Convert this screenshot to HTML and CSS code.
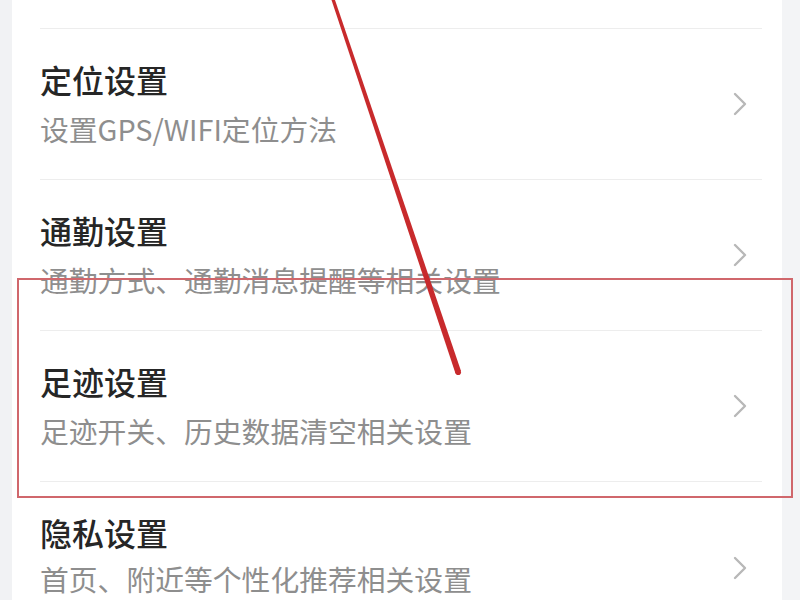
FILE: index.html
```html
<!DOCTYPE html>
<html lang="zh-CN">
<head>
<meta charset="utf-8">
<title>设置</title>
<link rel="stylesheet" href="styles.css">
</head>
<body>
<div class="screen">
  <div class="edge edge-left"></div>
  <div class="card">
    <div class="tail"></div>
    <div class="item">
      <div class="texts">
        <div class="title">定位设置</div>
        <div class="sub">设置GPS/WIFI定位方法</div>
      </div>
      <svg class="chev" viewBox="0 0 14 24" width="14" height="24"><polyline points="2,2 12,12 2,22"/></svg>
    </div>
    <div class="item">
      <div class="texts">
        <div class="title">通勤设置</div>
        <div class="sub">通勤方式、通勤消息提醒等相关设置</div>
      </div>
      <svg class="chev" viewBox="0 0 14 24" width="14" height="24"><polyline points="2,2 12,12 2,22"/></svg>
    </div>
    <div class="item">
      <div class="texts">
        <div class="title">足迹设置</div>
        <div class="sub">足迹开关、历史数据清空相关设置</div>
      </div>
      <svg class="chev" viewBox="0 0 14 24" width="14" height="24"><polyline points="2,2 12,12 2,22"/></svg>
    </div>
    <div class="item item-last">
      <div class="texts">
        <div class="title">隐私设置</div>
        <div class="sub">首页、附近等个性化推荐相关设置</div>
      </div>
      <svg class="chev" viewBox="0 0 14 24" width="14" height="24"><polyline points="2,2 12,12 2,22"/></svg>
    </div>
  </div>
  <div class="edge edge-right"></div>

  <div class="highlight"></div>
  <svg class="arrow" viewBox="0 0 800 600" width="800" height="600">
    <polygon points="331.5,0 335,0 461,371 455.5,373.5"/>
    <circle cx="458.2" cy="372.3" r="2.8"/>
  </svg>
</div>
</body>
</html>
```

FILE: styles.css
```css
html, body {
  margin: 0;
  padding: 0;
}
body {
  background: #f4f4f6;
  font-family: "Noto Sans CJK SC", "Noto Sans", sans-serif;
  overflow: hidden;
}
.screen {
  position: relative;
  width: 800px;
  height: 600px;
  display: flex;
  overflow: hidden;
}
.edge-left {
  width: 12px;
  background: #f1f2f4;
}
.edge-right {
  flex: 1;
  background: #f3f4f6;
}
.card {
  width: 770px;
  background: #ffffff;
  padding: 0 20px 0 28px;
  box-sizing: border-box;
}
.tail {
  height: 28px;
}
.item {
  border-top: 1px solid #ededed;
  height: 150px;
  display: flex;
  align-items: center;
  padding-right: 15px;
}
.item-last {
  height: 118px;
  align-items: flex-start;
  padding-top: 30px;
  box-sizing: border-box;
}
.item-last .chev {
  margin-top: 44px;
}
.texts {
  flex: 1;
  display: flex;
  flex-direction: column;
  gap: 12px;
  padding-bottom: 2px;
}
.item-last .texts {
  gap: 10px;
}
.title {
  font-size: 32px;
  line-height: 40px;
  font-weight: 500;
  color: #262626;
}
.sub {
  font-size: 28.8px;
  line-height: 36px;
  color: #8e8e8e;
}
.item-last .sub {
  line-height: 34px;
}
.chev {
  flex: none;
  fill: none;
  stroke: #b8b8b8;
  stroke-width: 2.4;
  stroke-linecap: round;
  stroke-linejoin: round;
}
.highlight {
  position: absolute;
  left: 17px;
  top: 278px;
  width: 772px;
  height: 216px;
  border: 2px solid #d0676c;
}
.arrow {
  position: absolute;
  left: 0;
  top: 0;
  fill: #c82a2c;
}
```
